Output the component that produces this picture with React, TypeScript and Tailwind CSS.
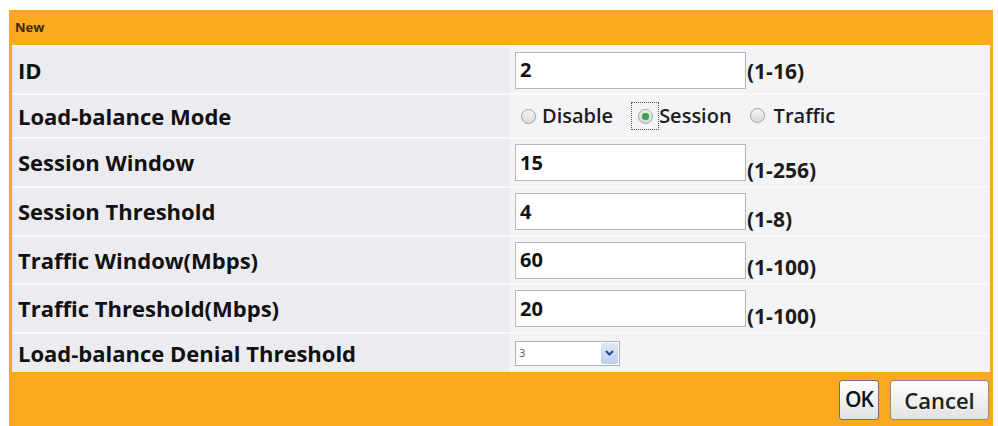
import React from "react";

const font = { fontFamily: '"Open Sans", "DejaVu Sans", sans-serif' };

type Row = { label: string; h: string; kind: "input" | "radio" | "select"; value?: string; range?: string; low?: boolean };

const rows: Row[] = [
  { label: "ID", h: "h-[48px]", kind: "input", value: "2", range: "(1-16)" },
  { label: "Load-balance Mode", h: "h-[44px]", kind: "radio" },
  { label: "Session Window", h: "h-[49px]", kind: "input", value: "15", range: "(1-256)", low: true },
  { label: "Session Threshold", h: "h-[49px]", kind: "input", value: "4", range: "(1-8)", low: true },
  { label: "Traffic Window(Mbps)", h: "h-[48px]", kind: "input", value: "60", range: "(1-100)", low: true },
  { label: "Traffic Threshold(Mbps)", h: "h-[49px]", kind: "input", value: "20", range: "(1-100)", low: true },
  { label: "Load-balance Denial Threshold", h: "h-[38px]", kind: "select" },
];

const Radio = ({ checked }: { checked?: boolean }) => (
  <span className="inline-flex h-[15px] w-[15px] items-center justify-center rounded-full border border-[#a0a0a0] bg-gradient-to-b from-[#f4f4f4] to-[#dadada]">
    {checked && <span className="h-[7px] w-[7px] rounded-full bg-[#3fa34d] shadow-[0_0_2px_#7ad07f]" />}
  </span>
);

function ValueCell({ row }: { row: Row }) {
  if (row.kind === "radio") {
    return (
      <div className="flex items-center pl-[11px] text-[20px] font-semibold text-[#1c1c1c]">
        <Radio />
        <span className="ml-[6px]">Disable</span>
        <span className="ml-[18px] flex h-[28px] w-[28px] items-center justify-center border border-dotted border-[#555]">
          <Radio checked />
        </span>
        <span>Session</span>
        <span className="ml-[18px]">
          <Radio />
        </span>
        <span className="ml-[9px]">Traffic</span>
      </div>
    );
  }
  if (row.kind === "select") {
    return (
      <div className="flex items-center pl-[5px]">
        <div className="flex h-[25px] w-[105px] items-center justify-between border border-[#a9b3bf] bg-white pl-[3px] pr-[1px]">
          <span className="text-[11px] text-[#555]">3</span>
          <span className="flex h-[21px] w-[17px] items-center justify-center rounded-[2px] bg-gradient-to-b from-[#dfe8f7] to-[#bdd0ee]">
            <svg width="9" height="6" viewBox="0 0 9 6">
              <path d="M1 1 L4.5 4.5 L8 1" fill="none" stroke="#2c4a86" strokeWidth="2" />
            </svg>
          </span>
        </div>
      </div>
    );
  }
  return (
    <div className="flex items-end pl-[5px]">
      <div className="flex h-[37px] w-[231px] items-center border border-[#aeb8c1] bg-white pl-[4px] text-[20px] font-bold text-[#111]">
        {row.value}
      </div>
      <span className={`${row.low ? "-mb-[5px]" : "mb-[1px]"} ml-[1px] text-[21px] font-bold text-[#1c1c1c]`}>{row.range}</span>
    </div>
  );
}

export default function App() {
  return (
    <div className="h-[426px] w-[998px] overflow-hidden bg-white pl-[9px] pt-[10px]" style={font}>
      <div className="w-[984px] bg-[#fca820] px-[3px]">
        <div className="flex h-[35px] items-center pl-[3px] text-[13px] font-bold text-[#3d2a05]">New</div>
        <div className="bg-[#f7f6f9] pt-[2px]">
          {rows.map((row, i) => (
            <div key={i} className={`grid grid-cols-[498px_1fr] ${row.h} ${i < rows.length - 1 ? "border-b-2 border-[#f9f9fb]" : ""}`}>
              <div className="flex items-center bg-[#ecebef] pl-[6px] text-[22px] font-bold text-[#111]">{row.label}</div>
              <div className="flex items-center bg-[#f4f4f7]">
                <ValueCell row={row} />
              </div>
            </div>
          ))}
        </div>
        <div className="flex h-[60px] items-start justify-end gap-[11px] pr-[1px] pt-[8px]">
          <button className="h-[40px] w-[40px] rounded-[3px] border border-[#707070] bg-gradient-to-b from-[#ffffff] to-[#e2e2e2] text-[21px] font-semibold tracking-[-1px] text-[#111]">
            OK
          </button>
          <button className="h-[40px] w-[99px] rounded-[3px] border border-[#8a8a8a] bg-gradient-to-b from-[#ffffff] to-[#e2e2e2] text-[22px] font-semibold text-[#222]">
            Cancel
          </button>
        </div>
      </div>
    </div>
  );
}
